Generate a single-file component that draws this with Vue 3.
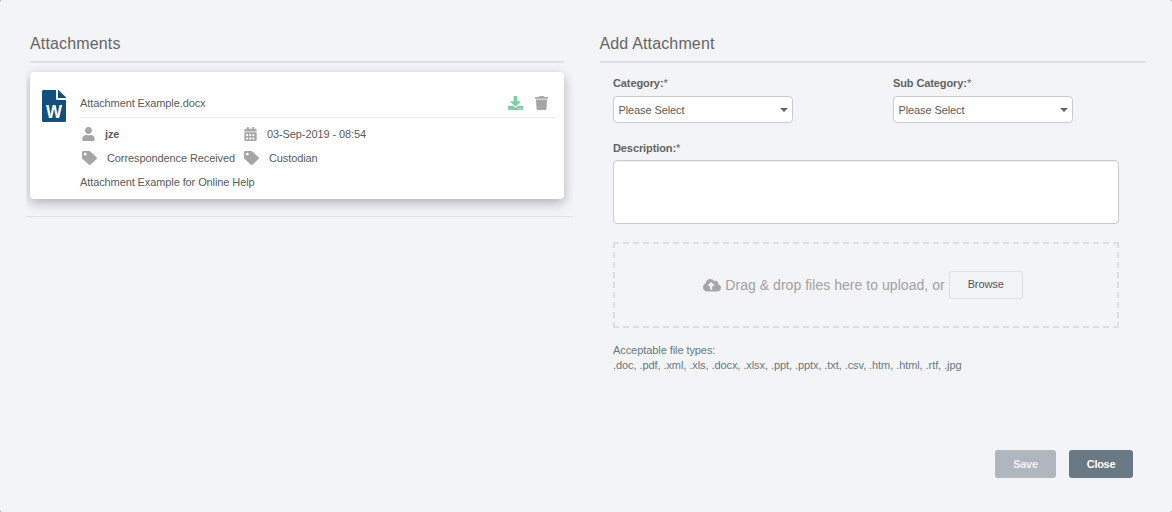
<script setup>
const paths = {
  user: 'M224 256c70.7 0 128-57.3 128-128S294.7 0 224 0 96 57.3 96 128s57.3 128 128 128zm89.6 32h-16.7c-22.2 10.2-46.9 16-72.9 16s-50.6-5.8-72.9-16h-16.7C60.2 288 0 348.2 0 422.4V464c0 26.5 21.5 48 48 48h352c26.5 0 48-21.5 48-48v-41.6c0-74.2-60.2-134.4-134.4-134.4z',
  tag: 'M0 252.118V48C0 21.49 21.49 0 48 0h204.118a48 48 0 0 1 33.941 14.059l211.882 211.882c18.745 18.745 18.745 49.137 0 67.882L293.823 497.941c-18.745 18.745-49.137 18.745-67.882 0L14.059 286.059A48 48 0 0 1 0 252.118zM112 64c-26.51 0-48 21.49-48 48s21.49 48 48 48 48-21.49 48-48-21.49-48-48-48z',
  trash: 'M432 32H312l-9.4-18.7A24 24 0 0 0 281.1 0H166.8a23.72 23.72 0 0 0-21.4 13.3L136 32H16A16 16 0 0 0 0 48v32a16 16 0 0 0 16 16h416a16 16 0 0 0 16-16V48a16 16 0 0 0-16-16zM53.2 467a48 48 0 0 0 47.9 45h245.8a48 48 0 0 0 47.9-45L416 128H32z',
  download: 'M216 0h80c13.3 0 24 10.7 24 24v168h87.7c17.8 0 26.7 21.5 14.1 34.1L269.7 378.3c-7.5 7.5-19.8 7.5-27.3 0L90.1 226.1c-12.6-12.6-3.7-34.1 14.1-34.1H192V24c0-13.3 10.7-24 24-24zm296 376v112c0 13.3-10.7 24-24 24H24c-13.3 0-24-10.7-24-24V376c0-13.3 10.7-24 24-24h146.7l49 49c20.1 20.1 52.5 20.1 72.6 0l49-49H488c13.3 0 24 10.7 24 24zm-124 88c0-11-9-20-20-20s-20 9-20 20 9 20 20 20 20-9 20-20zm64 0c0-11-9-20-20-20s-20 9-20 20 9 20 20 20 20-9 20-20z',
  cloud: 'M537.6 226.6c4.1-10.7 6.4-22.4 6.4-34.6 0-53-43-96-96-96-19.7 0-38.1 6-53.3 16.2C367 64.2 315.3 32 256 32c-88.4 0-160 71.6-160 160 0 2.7.1 5.4.2 8.1C40.2 219.8 0 273.2 0 336c0 79.5 64.5 144 144 144h368c70.7 0 128-57.3 128-128 0-61.9-44-113.6-102.4-125.4zM393.4 288H328v112c0 8.8-7.2 16-16 16h-48c-8.8 0-16-7.2-16-16V288h-65.4c-14.3 0-21.4-17.2-11.3-27.3l105.4-105.4c6.2-6.2 16.4-6.2 22.6 0l105.4 105.4c10.1 10.1 2.9 27.3-11.3 27.3z',
}
const cells = [76, 192, 308].flatMap((x) => [256, 384].map((y) => ({ x, y })))
const fields = ['Category:', 'Sub Category:']
const types = '.doc, .pdf, .xml, .xls, .docx, .xlsx, .ppt, .pptx, .txt, .csv, .htm, .html, .rtf, .jpg'
</script>

<template>
  <main class="dialog">
    <section class="left">
      <h2>Attachments</h2>
      <div class="list">
        <article class="card">
          <div class="file">
            <svg width="24" height="32" viewBox="0 0 24 32">
              <path fill="#12507b" d="M1.500 0H14v8.500q0 1.500 1.500 1.500H24v20.500q0 1.500-1.500 1.500h-21Q0 32 0 30.500v-29Q0 0 1.500 0zM16 0h.5l7.100 7.100q.4.400.4.900H16z" />
              <text x="12" y="28" text-anchor="middle" textLength="16" lengthAdjust="spacingAndGlyphs">W</text>
            </svg>
          </div>
          <div class="info">
            <div class="name">
              <span>Attachment Example.docx</span>
              <svg class="dl" width="15" height="14" viewBox="0 0 512 512" preserveAspectRatio="none"><path :d="paths.download" /></svg>
              <svg class="trash" width="13" height="14" viewBox="0 0 448 512" preserveAspectRatio="none"><path :d="paths.trash" /></svg>
            </div>
            <div class="meta">
              <div><svg width="13" height="14" viewBox="0 0 448 512"><path :d="paths.user" /></svg><b>jze</b></div>
              <div>
                <svg width="13" height="14" viewBox="0 0 448 512">
                  <path d="M400 64h-48V16c0-9-7-16-16-16h-32c-9 0-16 7-16 16v48H160V16c0-9-7-16-16-16h-32c-9 0-16 7-16 16v48H48C21 64 0 85 0 112v48h448v-48c0-27-21-48-48-48zM0 192h448v272c0 27-21 48-48 48H48c-27 0-48-21-48-48z" />
                  <rect v-for="c in cells" :key="c.x + '-' + c.y" class="cell" :x="c.x - 12" :y="c.y" width="72" height="72" rx="10" />
                </svg>03-Sep-2019 - 08:54
              </div>
              <div class="cat"><svg width="15" height="14" viewBox="0 0 512 512" preserveAspectRatio="none"><path :d="paths.tag" /></svg>Correspondence Received</div>
              <div class="cat"><svg width="15" height="14" viewBox="0 0 512 512" preserveAspectRatio="none"><path :d="paths.tag" /></svg>Custodian</div>
            </div>
            <div class="note">Attachment Example for Online Help</div>
          </div>
        </article>
      </div>
    </section>

    <section class="right">
      <h2>Add Attachment</h2>
      <form class="form" @submit.prevent>
        <div class="fields">
          <div v-for="f in fields" :key="f" class="field">
            <label><b>{{ f }}</b>*</label>
            <div class="select">Please Select<i></i></div>
          </div>
        </div>
        <label class="desc"><b>Description:</b>*</label>
        <textarea></textarea>
        <div class="drop">
          <svg width="18" height="14.400" viewBox="0 0 640 512"><path :d="paths.cloud" /></svg>
          <span>Drag &amp; drop files here to upload, or</span>
          <button type="button" class="browse">Browse</button>
        </div>
        <p class="types">Acceptable file types:<br />{{ types }}</p>
      </form>
      <footer>
        <button type="button" class="save">Save</button>
        <button type="button" class="close">Close</button>
      </footer>
    </section>
  </main>
</template>

<style>
html { background: #8f9294; }
</style>

<style scoped>
* { box-sizing: border-box; }
.dialog {
  width: 1172px;
  height: 512px;
  display: grid;
  grid-template-columns: 574px 1fr;
  background: #f2f4f6;
  border-radius: 2px;
  color: #5b5b5b;
  font: 11px/15px "Liberation Sans", Arial, sans-serif;
  letter-spacing: -.1px;
}
h2 {
  height: 29px;
  margin: 34px 0 0;
  border-bottom: 2px solid #dddfe1;
  color: #666;
  font-size: 16px;
  font-weight: 400;
  line-height: 20px;
  letter-spacing: .15px;
}
.left h2 { margin-left: 30px; margin-right: 10px; }
.list {
  height: 154px;
  margin: 0 1px 0 26px;
  padding: 9px 9px 0 4px;
  border-bottom: 1px solid #dddfe1;
  overflow: hidden;
}
.card {
  height: 127px;
  display: flex;
  padding: 18px 9px 0 12px;
  background: #fff;
  border-radius: 4px;
  box-shadow: 0 4px 12px rgba(0, 0, 0, .27);
}
.file { width: 38px; }
.file text { fill: #fff; font: bold 18px "Liberation Sans", Arial, sans-serif; letter-spacing: 0; }
.info { flex: 1; }
.name {
  height: 28px;
  display: flex;
  align-items: center;
  padding-right: 7px;
  border-bottom: 1px solid #e9eaeb;
}
.name span { flex: 1; }
.name svg { margin-bottom: 1px; }
.info svg { fill: #a6a6a6; flex: none; }
.info svg.dl { fill: #82cea4; margin-right: 12px; }
.meta {
  display: grid;
  grid-template-columns: 162px 1fr;
  grid-auto-rows: 24px;
  padding: 4px 0 0 2px;
}
.meta div { display: flex; align-items: center; white-space: nowrap; }
.meta svg { margin-right: 10px; }
.cell { fill: #fff; }
.note { padding-top: 5px; }

.right h2 { margin-left: 26px; margin-right: 26px; text-indent: -.5px; }
.form { width: 506px; margin: 13px 0 0 39px; }
.fields { display: flex; gap: 100px; }
.field { width: 180px; }
label { display: block; line-height: 15px; color: #636363; }
.select {
  height: 27px;
  display: flex;
  align-items: center;
  justify-content: space-between;
  margin-top: 5px;
  padding: 1px 4px 0 4.5px;
  background: #fff;
  border: 1px solid #c9cbcd;
  border-radius: 4px;
}
.select i { border: 4px solid transparent; border-top-color: #666; border-bottom: 0; }
.desc { margin-top: 18px; }
textarea {
  display: block;
  width: 506px;
  height: 64px;
  margin: 4px 0 18px;
  border: 1px solid #c9cbcd;
  border-radius: 4px;
  box-shadow: inset 0 1px 1px rgba(0, 0, 0, .075);
  background: #fff;
  resize: none;
}
.drop {
  height: 86px;
  display: flex;
  align-items: center;
  justify-content: center;
  gap: 4px;
  padding-right: 6px;
  border: 2px dashed #dddfe1;
  color: #a2a2a2;
  font-size: 14px;
  letter-spacing: .04px;
}
.drop svg { fill: #a6a6a6; }
button { font: 11px/14px "Liberation Sans", Arial, sans-serif; height: 28px; padding: 0; border-radius: 3px; }
.browse { width: 74px; padding-bottom: 2px; border: 1px solid #dddfe1; background: transparent; color: #555; letter-spacing: -.1px; }
.types { margin: 15px 0 0; color: #697981; letter-spacing: -.075px; }
footer { display: flex; justify-content: flex-end; gap: 13px; margin: 77px 39px 0 0; }
footer button { border: 0; color: #fff; font-weight: 700; letter-spacing: -.3px; }
.save { width: 61px; background: #aeb6be; color: #f0f2f4; }
.close { width: 64px; background: #697983; }
</style>
